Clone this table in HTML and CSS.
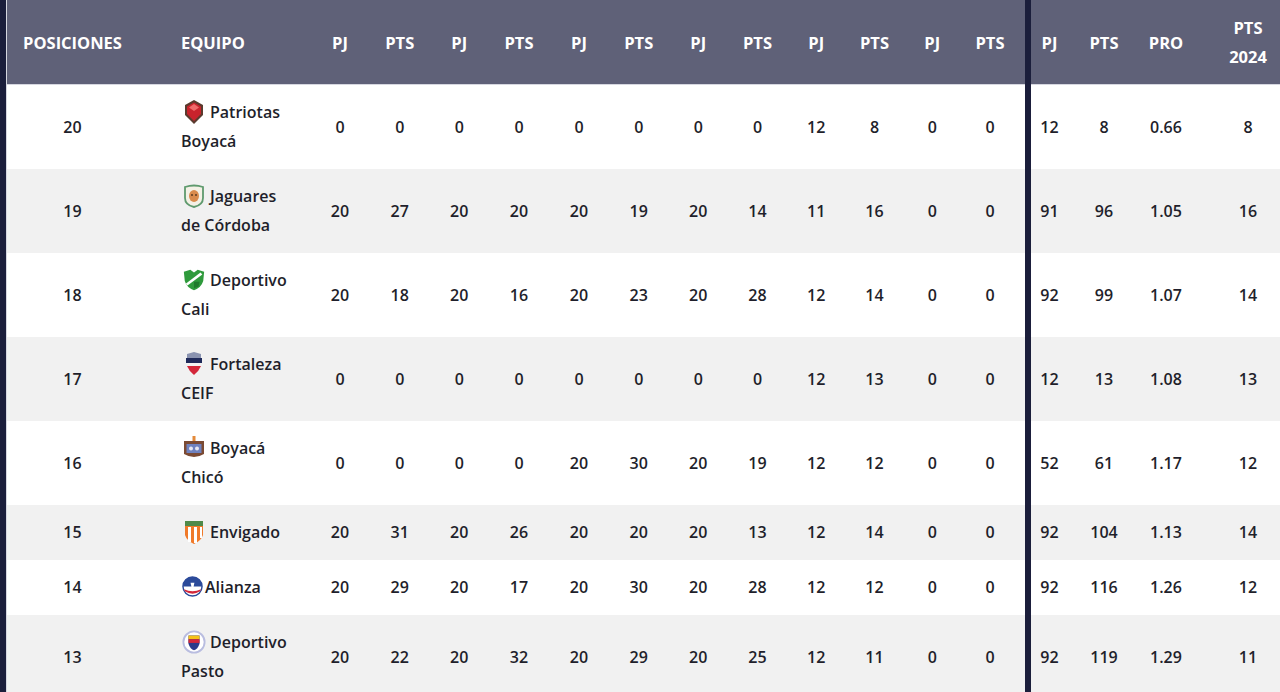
FILE: index.html
```html
<!DOCTYPE html>
<html lang="es">
<head>
<meta charset="utf-8">
<title>Tabla de posiciones</title>
<link rel="stylesheet" href="styles.css">
</head>
<body>
<div class="wrap">
<table class="tabla">
  <colgroup>
    <col class="w-pos"><col class="w-team">
    <col class="w60"><col class="w595"><col class="w595"><col class="w60"><col class="w60"><col class="w595"><col class="w595"><col class="w59"><col class="w585"><col class="w58"><col class="w575"><col class="w64">
    <col class="w-div">
    <col class="w37"><col class="w72"><col class="w52"><col class="w112">
  </colgroup>
  <thead>
    <tr>
      <th>POSICIONES</th><th class="team">EQUIPO</th>
      <th>PJ</th><th>PTS</th><th>PJ</th><th>PTS</th><th>PJ</th><th>PTS</th><th>PJ</th><th>PTS</th><th>PJ</th><th>PTS</th><th>PJ</th><th class="last">PTS</th>
      <th class="div"></th>
      <th>PJ</th><th>PTS</th><th>PRO</th><th>PTS<br>2024</th>
    </tr>
  </thead>
  <tbody>
    <tr>
      <td>20</td>
      <td class="team"><svg class="logo" viewBox="0 0 22 26"><path d="M11 1 L20 6 L20 16 L11 25 L2 16 L2 6 Z" fill="#5b3b2e"/><path d="M11 3.5 L18 7.5 L18 15 L11 22 L4 15 L4 7.5 Z" fill="#c8232c"/><path d="M11 5 L16 8.5 L11 12 L6 8.5 Z" fill="#f06a6a"/></svg>Patriotas<br>Boyacá</td>
      <td>0</td><td>0</td><td>0</td><td>0</td><td>0</td><td>0</td><td>0</td><td>0</td><td>12</td><td>8</td><td>0</td><td class="last">0</td>
      <td class="div"></td>
      <td>12</td><td>8</td><td>0.66</td><td>8</td>
    </tr>
    <tr>
      <td>19</td>
      <td class="team"><svg class="logo" viewBox="0 0 24 24"><path d="M3 3 Q12 0 21 3 L21 14 Q21 21 12 23 Q3 21 3 14 Z" fill="#f4f1e6" stroke="#5f9a6e" stroke-width="1.8"/><ellipse cx="12" cy="12" rx="5" ry="6" fill="#d98b4c"/><circle cx="10" cy="11" r="1" fill="#5a3a20"/><circle cx="14" cy="11" r="1" fill="#5a3a20"/></svg>Jaguares<br>de Córdoba</td>
      <td>20</td><td>27</td><td>20</td><td>20</td><td>20</td><td>19</td><td>20</td><td>14</td><td>11</td><td>16</td><td>0</td><td class="last">0</td>
      <td class="div"></td>
      <td>91</td><td>96</td><td>1.05</td><td>16</td>
    </tr>
    <tr>
      <td>18</td>
      <td class="team"><svg class="logo" viewBox="0 0 26 24"><path d="M2 3 L9 1 L13 4 L17 1 L24 3 L23 13 Q21 20 13 23 Q5 20 3 13 Z" fill="#2f9a3c"/><path d="M4 16 L20 4 L22 6 L6 18 Z" fill="#ffffff"/><path d="M13 14 L19 14 L18 19 L13 21 Z" fill="#1f7a2c"/></svg>Deportivo<br>Cali</td>
      <td>20</td><td>18</td><td>20</td><td>16</td><td>20</td><td>23</td><td>20</td><td>28</td><td>12</td><td>14</td><td>0</td><td class="last">0</td>
      <td class="div"></td>
      <td>92</td><td>99</td><td>1.07</td><td>14</td>
    </tr>
    <tr>
      <td>17</td>
      <td class="team"><svg class="logo" viewBox="0 0 22 26"><path d="M4 3 L11 1 L18 3 L18 7 L4 7 Z" fill="#8a93b0"/><path d="M3 7 L19 7 L19 12 L3 12 Z" fill="#1f2a5a"/><path d="M3 12 L19 12 L18 15 L4 15 Z" fill="#f2f2f2"/><path d="M4 15 L18 15 Q16 20 11 24 Q6 20 4 15 Z" fill="#d3273a"/></svg>Fortaleza<br>CEIF</td>
      <td>0</td><td>0</td><td>0</td><td>0</td><td>0</td><td>0</td><td>0</td><td>0</td><td>12</td><td>13</td><td>0</td><td class="last">0</td>
      <td class="div"></td>
      <td>12</td><td>13</td><td>1.08</td><td>13</td>
    </tr>
    <tr>
      <td>16</td>
      <td class="team"><svg class="logo" viewBox="0 0 24 26"><rect x="10.5" y="1" width="3" height="5" fill="#e48a3a"/><path d="M2 6 L22 6 L22 19 Q12 25 2 19 Z" fill="#7b4a33"/><rect x="4.5" y="9" width="15" height="9" fill="#6f82bf"/><circle cx="9" cy="13.5" r="2" fill="#e8e8f2"/><circle cx="15" cy="13.5" r="2" fill="#e8e8f2"/></svg>Boyacá<br>Chicó</td>
      <td>0</td><td>0</td><td>0</td><td>0</td><td>20</td><td>30</td><td>20</td><td>19</td><td>12</td><td>12</td><td>0</td><td class="last">0</td>
      <td class="div"></td>
      <td>52</td><td>61</td><td>1.17</td><td>12</td>
    </tr>
    <tr>
      <td>15</td>
      <td class="team"><svg class="logo" viewBox="0 0 22 26"><path d="M2 2 L20 2 L20 16 Q18 22 11 25 Q4 22 2 16 Z" fill="#f07a2a"/><path d="M2 2 L20 2 L20 7 L2 7 Z" fill="#4f8a4a"/><rect x="5" y="8" width="3" height="15" fill="#ffffff"/><rect x="11" y="8" width="3" height="16" fill="#ffffff"/><rect x="17" y="8" width="2" height="11" fill="#ffffff"/></svg>Envigado</td>
      <td>20</td><td>31</td><td>20</td><td>26</td><td>20</td><td>20</td><td>20</td><td>13</td><td>12</td><td>14</td><td>0</td><td class="last">0</td>
      <td class="div"></td>
      <td>92</td><td>104</td><td>1.13</td><td>14</td>
    </tr>
    <tr>
      <td>14</td>
      <td class="team"><svg class="logo small" viewBox="0 0 22 22"><circle cx="11" cy="11" r="10" fill="#ffffff" stroke="#2b4a9a" stroke-width="1.5"/><path d="M1 11 A10 10 0 0 1 21 11 Z" fill="#2b4a9a"/><path d="M2 14 Q11 18 20 14 L19 16 Q11 21 3 16 Z" fill="#d3273a"/><path d="M9 7 L13 7 L12 12 L10 12 Z" fill="#ffffff"/></svg>Alianza</td>
      <td>20</td><td>29</td><td>20</td><td>17</td><td>20</td><td>30</td><td>20</td><td>28</td><td>12</td><td>12</td><td>0</td><td class="last">0</td>
      <td class="div"></td>
      <td>92</td><td>116</td><td>1.26</td><td>12</td>
    </tr>
    <tr>
      <td>13</td>
      <td class="team"><svg class="logo" viewBox="0 0 26 26"><circle cx="13" cy="13" r="11.5" fill="#ffffff" stroke="#b9bde0" stroke-width="2"/><path d="M7 6 L19 6 L19 15 Q17 21 13 22 Q9 21 7 15 Z" fill="#2a3a8a"/><path d="M7 6 L19 6 L19 10 L7 10 Z" fill="#f5c21a"/><path d="M7 10 L19 10 L19 14 L7 14 Z" fill="#d3273a"/></svg>Deportivo<br>Pasto</td>
      <td>20</td><td>22</td><td>20</td><td>32</td><td>20</td><td>29</td><td>20</td><td>25</td><td>12</td><td>11</td><td>0</td><td class="last">0</td>
      <td class="div"></td>
      <td>92</td><td>119</td><td>1.29</td><td>11</td>
    </tr>
  </tbody>
</table>
</div>
</body>
</html>
```

FILE: styles.css
```css
html, body {
  margin: 0;
  padding: 0;
  height: 100%;
}
body {
  background: #1b1e3b;
  overflow: hidden;
  font-family: "Open Sans", "Noto Sans", sans-serif;
}
.wrap {
  padding-left: 6px;
}
.tabla {
  table-layout: fixed;
  width: 1297px;
  border-collapse: separate;
  border-spacing: 0;
  border-left: 1px solid #d6d7e0;
  background: #ffffff;
}
.w-pos { width: 131px; }
.w-team { width: 172px; }
.w60 { width: 60px; }
.w595 { width: 59.5px; }
.w59 { width: 59px; }
.w585 { width: 58.5px; }
.w58 { width: 58px; }
.w575 { width: 57.5px; }
.w64 { width: 64px; }
.w-div { width: 6px; }
.w37 { width: 37px; }
.w72 { width: 72px; }
.w52 { width: 52px; }
.w112 { width: 112px; }

th, td {
  padding: 13px 0;
  line-height: 29px;
  text-align: center;
  vertical-align: middle;
  font-size: 16px;
}
th {
  background: #5f6178;
  color: #ffffff;
  font-weight: 700;
  font-size: 16.5px;
  border-bottom: 1px solid #d6d7e0;
  height: 58px;
}
td {
  color: #1f1f2b;
  font-weight: 600;
}
tbody tr:nth-child(even) td {
  background: #f1f1f1;
}
th.team, td.team {
  text-align: left;
  padding-left: 43px;
  padding-right: 4px;
}
th.last, td.last {
  padding-right: 6px;
}
th.div, td.div,
tbody tr:nth-child(even) td.div {
  background: #1b1e3b;
  padding: 0;
}
th.div {
  border-bottom-color: #1b1e3b;
}
.logo {
  width: 24px;
  height: 26px;
  vertical-align: middle;
  margin: -4px 4px 0 1px;
}
.logo.small {
  width: 21px;
  height: 21px;
  margin-right: 2px;
}
```
